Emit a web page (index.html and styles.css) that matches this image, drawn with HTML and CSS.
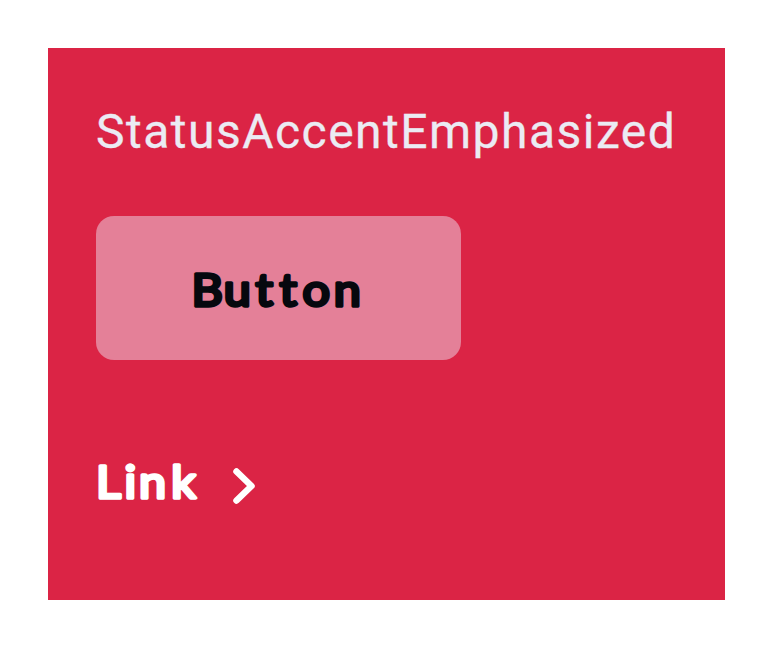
FILE: index.html
```
<!DOCTYPE html>
<html lang="en">
<head>
<meta charset="utf-8">
<title>StatusAccentEmphasized</title>
<link rel="stylesheet" href="styles.css">
</head>
<body>
<main class="card">
<p class="card-title">StatusAccentEmphasized</p>
<button class="button" type="button"><svg class="label button-label" viewBox="0 0 173 72"><text transform="scale(1.1 1)" y="54.3" x="-0.5 28.8 57.8 79.5 100.5 128.8">Button</text></svg></button>
<a class="link" href="#"><svg class="label link-label" viewBox="0 0 104 72"><text transform="scale(1.1 1)" y="54.3" x="0 26 39 68.5">Link</text></svg><svg class="chevron" viewBox="0 0 22 36" aria-hidden="true"><path d="M3.5 3.5L18.5 18L3.5 32.5"/></svg></a>
</main>
</body>
</html>
```

FILE: styles.css
```
* { box-sizing: border-box; }
body { margin: 0; padding: 48px; background: #fff; }
.card {
  display: flex;
  flex-direction: column;
  align-items: flex-start;
  width: 677px;
  height: 552px;
  padding: 48px;
  background: #db2445;
}
.card-title {
  margin: 0;
  height: 72px;
  font: 400 48px/72px Roboto, sans-serif;
  letter-spacing: 1.48px;
  color: #ebebf3;
  -webkit-text-stroke: 0.3px #ebebf3;
  white-space: nowrap;
}
.button {
  display: flex;
  align-items: center;
  justify-content: center;
  width: 365px;
  height: 144px;
  margin: 48px 0 0;
  padding: 0;
  border: 0;
  border-radius: 18px;
  background: #e48098;
  color: #06080e;
}
.label {
  display: block;
  height: 72px;
  overflow: visible;
  font-family: Lato, sans-serif;
  font-size: 44px;
  font-weight: 400;
  fill: currentColor;
  stroke: currentColor;
  stroke-width: 3.4px;
  stroke-linejoin: round;
}
.button-label { width: 173px; }
.link-label { width: 104px; }
.link {
  display: flex;
  align-items: center;
  height: 144px;
  margin-top: 48px;
  color: #fff;
  text-decoration: none;
}
.chevron {
  width: 22px;
  height: 36px;
  margin: 12px 0 0 33px;
  fill: none;
  stroke: #fff;
  stroke-width: 6.5;
  stroke-linecap: round;
  stroke-linejoin: round;
}
```
